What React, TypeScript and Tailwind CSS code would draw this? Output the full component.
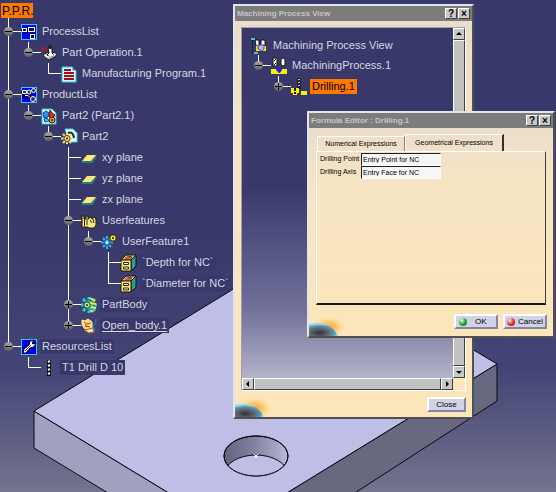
import { useState, type ReactNode } from "react";

const icons: Record<string, ReactNode> = {
  process: (
    <>
      <rect x="0.5" y="0.5" width="15" height="15" fill="#0000f0" stroke="#3cc8f4" />
      <path d="M0 6h8M11 6v7M7 8H3" fill="none" stroke="#000" strokeWidth="2" />
      <g fill="#0c0c60" stroke="#fff">
        <rect x="1.5" y="4.5" width="4" height="3" />
        <rect x="7.5" y="3.5" width="6" height="4" />
        <rect x="9.5" y="10.5" width="4" height="4" />
      </g>
    </>
  ),
  product: (
    <>
      <rect x="0.5" y="0.5" width="15" height="15" fill="#0000f0" stroke="#3cc8f4" />
      <path d="M0 5h13M8 8l4 6M2 9h6" stroke="#000" strokeWidth="3" />
      <g fill="#303050" stroke="#fff">
        <path d="M1.500 3.500h4v3h-4z" />
        <circle cx="8" cy="5" r="2" />
        <circle cx="12.500" cy="3.500" r="2" />
        <path d="M4 8.500h3l2 2" fill="none" />
        <circle cx="12" cy="12" r="2.500" />
      </g>
    </>
  ),
  resources: (
    <>
      <rect x="0.5" y="0.5" width="15" height="15" fill="#0000f0" stroke="#3cc8f4" />
      <path d="M2 14l1-4 5-4 1-4 4-1-2 3 1 1 3-1-2 4-4 1-4 5z" fill="#fff" stroke="#000" />
      <path d="M4 12l6-6" stroke="#555" />
    </>
  ),
  operation: (
    <>
      <path d="M0 4h7M1.500 1v6M0 7l4-5" stroke="#d01818" fill="none" />
      <path d="M3 9l5-2 7 1v3l-7 4-5-3z" fill="#c8c8b8" stroke="#222" />
      <path d="M7 3h4v5l2 2-4 2-3-2 2-2z" fill="#fff" stroke="#111" />
      <circle cx="9" cy="2" r="2" fill="#222" />
      <path d="M3 10l5 2 7-3" stroke="#fff" fill="none" />
    </>
  ),
  program: (
    <>
      <path d="M1 1h10l4 4v11H1z" fill="#c8f8ff" stroke="#36c6dc" />
      <path d="M11 1v4h4" fill="#187080" stroke="#fff" />
      <path d="M3 4h7M3 7h10M3 10h10M3 13h10" stroke="#a80c18" strokeWidth="2" />
    </>
  ),
  product2: (
    <>
      <path d="M1 1h10l4 4v11H1z" fill="#d8ffff" stroke="#30c0dc" />
      <path d="M2 5l3-2 3 2-1 4-4 1z" fill="#3090f0" stroke="#124890" />
      <path d="M9 2l2 3 3 2-2 3-4-1z" fill="#e83020" stroke="#601010" />
      <path d="M3 11l3-1 2 3-4 1z" fill="#50b8e8" stroke="#124890" />
      <circle cx="11" cy="12" r="3" fill="#e8a030" stroke="#401810" />
      <circle cx="11" cy="12" r="1" fill="#401810" />
    </>
  ),
  part: (
    <>
      <path d="M4 0h8l4 4v9h-8z" fill="#e4ffff" stroke="#30d4ec" />
      <path d="M7 4q5-2 6 5" stroke="#222" strokeWidth="2" fill="none" />
      <g stroke="#f4dc78" strokeWidth="2">
        <path d="M6 4v11M0 9.500h12M2 5l8 9M10 5l-8 9" />
      </g>
      <circle cx="6" cy="9.500" r="3" fill="#f4dc78" stroke="#51400c" />
      <circle cx="6" cy="9.500" r="1" fill="#223" />
    </>
  ),
  plane: (
    <>
      <path d="M1 11l1 1h9l4-6" fill="none" stroke="#248080" strokeWidth="2" />
      <path d="M6 5h9l-5 6H1z" fill="#ffe878" />
    </>
  ),
  features: (
    <>
      <path d="M1 3h2v3h2V3h2v3l3-2 1 2 3-2 1 3v5l-2 3H8l-1-1H1z" fill="#fce488" stroke="#2b2508" />
      <path d="M3.500 6v7M6 6v6M9 7l2 3M12 6l1 4" stroke="#302808" />
    </>
  ),
  feature: (
    <>
      <path d="M6 2v13M0 8.500h12M2 4l8 9M10 4l-8 9" stroke="#38b4ec" strokeWidth="2" />
      <circle cx="6" cy="8.500" r="3" fill="#40c4f4" stroke="#1c3c88" />
      <circle cx="6" cy="8.500" r="1" fill="#fff" />
      <rect x="9" y="1" width="6" height="6" rx="2" fill="#f8f000" stroke="#222" />
      <rect x="11" y="3" width="2" height="2" fill="#444" />
    </>
  ),
  catalog: (
    <>
      <path d="M0 5l5-5h10l-5 5z" fill="#f4b880" stroke="#221808" />
      <path d="M10 5l5-5v11l-5 5z" fill="#28a098" stroke="#111" />
      <path d="M0 5h10v11H0z" fill="#f8e878" stroke="#221808" />
      <path d="M2.500 7.500h5v2h-5zM2.500 12h5v2h-5z" fill="#fffbd0" stroke="#332b08" />
      <path d="M4 3h7M6 1l5 1" stroke="#603010" />
    </>
  ),
  body: (
    <>
      <path d="M8 0v16M0 8h16M2 2l12 12M14 2L2 14" stroke="#30c8d8" strokeWidth="3" />
      <circle cx="8" cy="8" r="5" fill="#30b8c8" stroke="#0c5868" />
      <path d="M9 1l5 3M9 6l6 1M10 10l5 1M9 13l3 2" stroke="#e8ec38" strokeWidth="2" />
      <circle cx="6" cy="8" r="3" fill="#e8ec38" stroke="#185868" />
      <circle cx="6" cy="8" r="1" fill="#103060" />
    </>
  ),
  openBody: (
    <>
      <path d="M1 2l3 1 3-2 4 3v7H4L1 7z" fill="#ffe078" stroke="#f8f0b0" />
      <path d="M3 4l3 2 4-1M4 8l5 1M5 6v3" stroke="#c83818" fill="none" />
      <path d="M15 1q1 4-3 7l2 5-4 2" stroke="#2888b8" fill="none" />
      <path d="M3 12l5 3 5-1-1-4-4 1z" fill="#fff0a0" stroke="#a85030" />
    </>
  ),
  drill: (
    <>
      <path d="M8 0v16" stroke="#080808" strokeWidth="4" />
      <path d="M7 2l2-1M7 6l2-1M7 10l2-1M7 14l2-1" stroke="#fff" strokeWidth="2" />
    </>
  ),
  view: (
    <>
      <path d="M0 1h4M3 15h4" stroke="#30c8e8" strokeWidth="2" />
      <path d="M1.500 2v13" stroke="#111" strokeDasharray="2 1" />
      <path d="M4 2h4v6H5zM10 2h4v6h-4z" fill="#fff" stroke="#111" />
      <path d="M5 8h10v5H5z" fill="#f8f000" />
      <path d="M7 7h6v4l-2 2-4-2z" fill="#b8b0f8" stroke="#5048a0" />
    </>
  ),
  machining: (
    <>
      <path d="M2 0h4v8H2zM10 1l2-1 2 1v6l-2 1-2-1z" fill="#fff" stroke="#111" />
      <path d="M3 3l2-2M3 7l2-2" stroke="#111" />
      <path d="M0 11h16v5H0z" fill="#f8f400" />
      <path d="M5 10h6v2l-2 3H8l-3-3z" fill="#3818e8" />
    </>
  ),
  drilling: (
    <>
      <path d="M8 -1v11" stroke="#080808" strokeWidth="3" />
      <path d="M7 1l2-1M7 4l2-1M7 7l2-1" stroke="#fff" />
      <path d="M0 9h8v5H6v2H2v-2H0zM10 12h6v4h-6z" fill="#f8f400" />
      <path d="M4 9v3M4 13v2" stroke="#181800" strokeWidth="2" />
    </>
  ),
};

function Icon({ name }: { name: string }) {
  return (
    <svg viewBox="0 0 16 16" className="size-4 shrink-0 overflow-visible" aria-hidden="true">
      {icons[name]}
    </svg>
  );
}

type Item = {
  label: string;
  icon: string;
  sign?: "-" | "+";
  children?: Item[];
  underline?: boolean;
  selected?: boolean;
};

const planes: Item[] = ["xy plane", "yz plane", "zx plane"].map((label) => ({ label, icon: "plane" }));

const project: Item[] = [
  {
    label: "ProcessList",
    icon: "process",
    sign: "-",
    children: [
      {
        label: "Part Operation.1",
        icon: "operation",
        sign: "-",
        children: [{ label: "Manufacturing Program.1", icon: "program" }],
      },
    ],
  },
  {
    label: "ProductList",
    icon: "product",
    sign: "-",
    children: [
      {
        label: "Part2 (Part2.1)",
        icon: "product2",
        sign: "-",
        children: [
          {
            label: "Part2",
            icon: "part",
            sign: "-",
            children: [
              ...planes,
              {
                label: "Userfeatures",
                icon: "features",
                sign: "-",
                children: [
                  {
                    label: "UserFeature1",
                    icon: "feature",
                    sign: "-",
                    children: [
                      { label: "`Depth for NC`", icon: "catalog" },
                      { label: "`Diameter for NC`", icon: "catalog" },
                    ],
                  },
                ],
              },
              { label: "PartBody", icon: "body", sign: "+" },
              { label: "Open_body.1", icon: "openBody", sign: "+", underline: true },
            ],
          },
        ],
      },
    ],
  },
  {
    label: "ResourcesList",
    icon: "resources",
    sign: "-",
    children: [{ label: "T1 Drill D 10", icon: "drill" }],
  },
];

const machining: Item[] = [
  {
    label: "MachiningProcess.1",
    icon: "machining",
    sign: "-",
    children: [{ label: "Drilling.1", icon: "drilling", sign: "+", selected: true }],
  },
];

function Branch({ item, guides, last }: { item: Item; guides: boolean[]; last: boolean }) {
  const [open, setOpen] = useState(item.sign !== "+");
  const sign = item.children ? (open ? "-" : "+") : item.sign;
  return (
    <li>
      <div className="flex h-[21px] items-center">
        {guides.map((line, i) => (
          <span key={i} className="flex h-full w-5 shrink-0 pl-[7px]">
            {line && <span className="h-full w-px bg-white" />}
          </span>
        ))}
        <span className="relative h-full w-5 shrink-0">
          <span className={`absolute left-[7px] top-0 w-px bg-white ${last ? "h-1/2" : "h-full"}`} />
          <span className="absolute left-[7px] right-0 top-[10px] h-px bg-white" />
          {sign && (
            <button
              aria-label={`Toggle ${item.label}`}
              onClick={() => setOpen(!open)}
              className="absolute left-[3px] top-[6px] size-[9px] rounded-full bg-gradient-to-b from-[#aaaaaa] to-[#606060]"
            >
              <span className="absolute left-px right-px top-1 h-px bg-black" />
              {sign === "+" && <span className="absolute bottom-px left-1 top-px w-px bg-black" />}
            </button>
          )}
        </span>
        <Icon name={item.icon} />
        <span
          className={`ml-[3px] whitespace-nowrap px-0.5 leading-[15px] ${
            item.selected ? "bg-[#ff7800] text-black" : "bg-[#38386a] text-[#d6d6e2]"
          } ${item.underline ? "underline underline-offset-2" : ""}`}
        >
          {item.label}
        </span>
      </div>
      {open && item.children && <Branches items={item.children} guides={[...guides, !last]} />}
    </li>
  );
}

function Branches({ items, guides = [] }: { items: Item[]; guides?: boolean[] }) {
  return (
    <ul>
      {items.map((item, i) => (
        <Branch key={item.label} item={item} guides={guides} last={i === items.length - 1} />
      ))}
    </ul>
  );
}

function Plate() {
  return (
    <svg
      viewBox="0 0 556 492"
      preserveAspectRatio="xMidYMid slice"
      className="absolute inset-0 h-full w-full"
      aria-hidden="true"
    >
      <defs>
        <linearGradient id="bore">
          <stop offset="0" stopColor="#64647e" />
          <stop offset="0.45" stopColor="#80809e" />
          <stop offset="1" stopColor="#b8b8dc" />
        </linearGradient>
        <clipPath id="rim">
          <ellipse cx="256" cy="456" rx="32" ry="20" />
        </clipPath>
      </defs>
      <g stroke="#080810" strokeLinejoin="round">
        <path d="M34 411L228 529v37L34 448z" fill="#a0a0c0" />
        <path d="M497 364L228 529v46L497 401z" fill="#686880" />
        <path d="M34 411L302 247 497 364 228 529z" fill="#bebee6" />
        <ellipse cx="256" cy="456" rx="32" ry="20" fill="url(#bore)" />
        <ellipse cx="256" cy="475" rx="32" ry="20" fill="#bebee6" clipPath="url(#rim)" />
        <ellipse cx="256" cy="456" rx="32" ry="20" fill="none" />
      </g>
      <path d="M254 454l4 4M258 454l-4 4" stroke="#fff" />
    </svg>
  );
}

const bevel = "border border-b-[#404040] border-l-white border-r-[#404040] border-t-white";

function TitleBar({ title }: { title: string }) {
  return (
    <header className="flex h-[15px] items-center gap-px bg-[#7c7c7c] pl-0.5 pr-0.5">
      <h2 className="flex-1 text-[8px] font-bold text-[#c6c6c6]">{title}</h2>
      {["?", "×"].map((mark) => (
        <button
          key={mark}
          aria-label={mark === "?" ? "Help" : "Close window"}
          className={`flex h-[11px] w-3 items-center justify-center bg-[#c8c8c8] text-[10px] font-bold leading-none text-black ${bevel}`}
        >
          {mark}
        </button>
      ))}
    </header>
  );
}

function Window({ title, className, children }: { title: string; className: string; children: ReactNode }) {
  return (
    <section
      aria-label={title}
      className={`absolute flex flex-col border-2 border-b-[#505050] border-l-[#e4e4ec] border-r-[#505050] border-t-[#e4e4ec] bg-gradient-to-b from-[#e8dccc] via-[#f6e4c4] via-30% to-[#fce6ba] ${className}`}
    >
      <TitleBar title={title} />
      {children}
    </section>
  );
}

function Globe() {
  return (
    <svg viewBox="0 0 36 24" className="h-6 w-9 self-end" aria-hidden="true">
      <defs>
        <radialGradient id="glow" cx="0.55" cy="0.65" r="0.5">
          <stop offset="0" stopColor="#ff9c30" />
          <stop offset="0.5" stopColor="#fccc70" />
          <stop offset="1" stopColor="#fce6ba" stopOpacity="0" />
        </radialGradient>
        <radialGradient id="earth" cx="0.35" cy="0.75" r="0.65">
          <stop offset="0" stopColor="#303038" />
          <stop offset="0.6" stopColor="#68717c" />
          <stop offset="0.85" stopColor="#48a4cc" />
          <stop offset="1" stopColor="#a0d8e8" />
        </radialGradient>
      </defs>
      <rect width="36" height="24" fill="url(#glow)" />
      <path d="M0 12Q20 7 29 24H0z" fill="url(#earth)" />
    </svg>
  );
}

function PushButton({ children, className = "" }: { children: ReactNode; className?: string }) {
  return (
    <button
      className={`flex h-[15px] items-center border-2 border-b-[#8484a4] border-l-white border-r-[#8484a4] border-t-white bg-[#d2d2e6] text-[8px] leading-none text-black ${className}`}
    >
      {children}
    </button>
  );
}

function Lamp({ className }: { className: string }) {
  return <span className={`size-2 rounded-full bg-radial-[at_35%_30%] from-white ${className}`} />;
}

function Arrow({ label, d }: { label: string; d: string }) {
  return (
    <button
      aria-label={label}
      className={`flex size-3 shrink-0 items-center justify-center bg-[#c8c8c8] ${bevel}`}
    >
      <svg viewBox="0 0 6 6" className="size-1.5" aria-hidden="true">
        <path d={d} />
      </svg>
    </button>
  );
}

function Thumb() {
  return <span className={`flex-1 bg-[#c2c2c2] ${bevel}`} />;
}

function Field({ id, label, value }: { id: string; label: string; value: string }) {
  return (
    <div className="flex h-[13px] items-start">
      <label htmlFor={id} className="w-[41px] shrink-0 whitespace-nowrap leading-[12px]">
        {label}
      </label>
      <input
        id={id}
        defaultValue={value}
        className="h-[13px] w-20 border border-b-white border-l-[#202020] border-r-white border-t-[#202020] bg-[#f6f6f6] px-px outline-none"
      />
    </div>
  );
}

export default function App() {
  return (
    <main className="relative min-h-screen overflow-hidden bg-gradient-to-b from-[#38386a] from-45% via-[#444476] via-75% to-[#74748e] font-['Liberation_Sans',Arial,sans-serif] text-[11px]">
      <Plate />
      <nav aria-label="Project" className="relative pl-px pt-[3px]">
        <span className="flex h-[15px] w-8 items-center bg-[#ff7800] pl-px text-[12px] text-black">P.P.R.</span>
        <span className="ml-[7px] block h-[3px] w-px bg-white" />
        <Branches items={project} />
      </nav>

      <Window title="Machining Process View" className="left-[233px] top-1 h-[415px] w-[241px]">
        <div className="mx-[6px] mt-[6px] flex min-h-0 flex-1 flex-col border border-b-white border-l-[#a0a0a8] border-r-white border-t-[#a0a0a8]">
          <div className="flex min-h-0 flex-1">
            <nav
              aria-label="Machining process"
              className="flex-1 bg-gradient-to-b from-[#38386a] from-45% via-[#70709a] via-80% to-[#b4b4ca] pl-[9px] pt-2"
            >
              <div className="flex h-[19px] items-center gap-1.5 text-[#d6d6e2]">
                <Icon name="view" />
                Machining Process View
              </div>
              <Branches items={machining} />
            </nav>
            <div className="flex w-3 flex-col">
              <Arrow label="Scroll up" d="M0 4h6L3 1z" />
              <Thumb />
              <Arrow label="Scroll down" d="M0 2h6L3 5z" />
            </div>
          </div>
          <div className="mr-3 flex h-3">
            <Arrow label="Scroll left" d="M4 0v6L1 3z" />
            <Thumb />
            <Arrow label="Scroll right" d="M2 0v6l3-3z" />
          </div>
        </div>
        <footer className="flex h-[26px] justify-between pr-[6px] pt-px">
          <Globe />
          <PushButton className="mt-[5px] w-[39px] justify-center">Close</PushButton>
        </footer>
      </Window>

      <Window title="Formula Editor : Drilling.1" className="left-[307px] top-[111px] h-[227px] w-[248px]">
        <div role="tablist" className="mt-[6px] flex items-end pl-2 text-[7px] text-black">
          <button
            role="tab"
            aria-selected="false"
            className="h-[15px] w-[88px] whitespace-nowrap border-l border-r border-t border-l-white border-r-[#808080] border-t-white"
          >
            Numerical Expressions
          </button>
          <button
            role="tab"
            aria-selected="true"
            className="h-[17px] w-[99px] whitespace-nowrap border-l border-r-2 border-t border-l-white border-r-[#303030] border-t-white"
          >
            Geometrical Expressions
          </button>
        </div>
        <div
          role="tabpanel"
          className="mx-[7px] flex-1 border border-b-2 border-b-[#181818] border-l-white border-r-[#404040] border-t-white pl-[3px] pt-px text-[7px] text-black"
        >
          <Field id="point" label="Drilling Point" value="Entry Point for NC" />
          <Field id="axis" label="Drilling Axis" value="Entry Face for NC" />
        </div>
        <footer className="flex h-[31px] items-start gap-[5px] pr-[6px]">
          <Globe />
          <span className="flex-1" />
          <PushButton className="mt-[9px] w-11 gap-2 pl-[3px]">
            <Lamp className="via-[#20a820] to-[#087008]" />
            OK
          </PushButton>
          <PushButton className="mt-[9px] w-11 gap-[3px] pl-[2px]">
            <Lamp className="via-[#e83030] to-[#900808]" />
            Cancel
          </PushButton>
        </footer>
      </Window>
    </main>
  );
}
